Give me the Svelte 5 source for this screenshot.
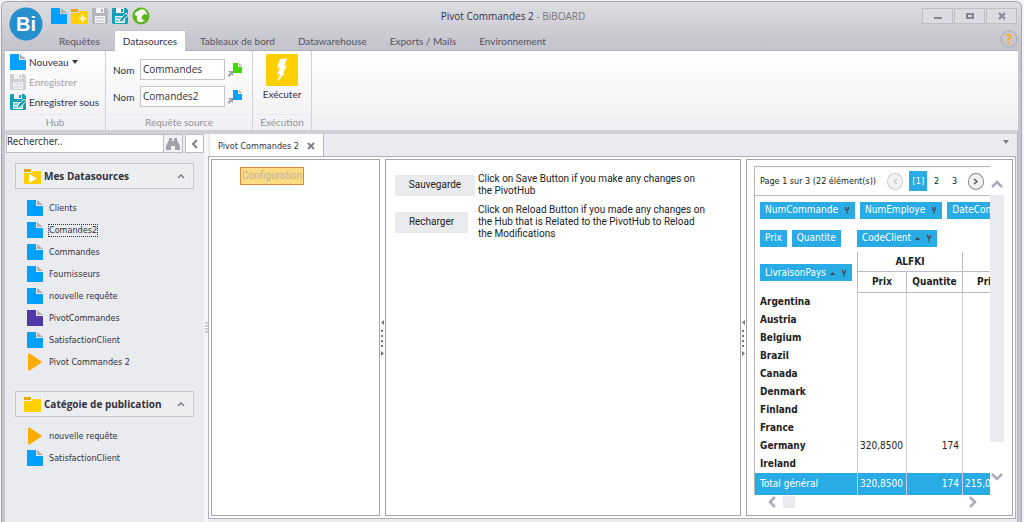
<script lang="ts">
	type Item = { label: string; kind: 'doc' | 'pivot' | 'play'; selected?: boolean };

	const tabs = [
		'Requêtes',
		'Datasources',
		'Tableaux de bord',
		'Datawarehouse',
		'Exports / Mails',
		'Environnement'
	];

	const groups: { title: string; play: boolean; items: Item[] }[] = [
		{
			title: 'Mes Datasources',
			play: true,
			items: [
				{ label: 'Clients', kind: 'doc' },
				{ label: 'Comandes2', kind: 'doc', selected: true },
				{ label: 'Commandes', kind: 'doc' },
				{ label: 'Fournisseurs', kind: 'doc' },
				{ label: 'nouvelle requête', kind: 'doc' },
				{ label: 'PivotCommandes', kind: 'pivot' },
				{ label: 'SatisfactionClient', kind: 'doc' },
				{ label: 'Pivot Commandes 2', kind: 'play' }
			]
		},
		{
			title: 'Catégoie de publication',
			play: false,
			items: [
				{ label: 'nouvelle requête', kind: 'play' },
				{ label: 'SatisfactionClient', kind: 'doc' }
			]
		}
	];

	const rows = [
		['Argentina', '', '', ''],
		['Austria', '', '', ''],
		['Belgium', '', '', ''],
		['Brazil', '', '', ''],
		['Canada', '', '', ''],
		['Denmark', '', '', ''],
		['Finland', '', '', ''],
		['France', '', '', ''],
		['Germany', '320,8500', '174', ''],
		['Ireland', '', '', '']
	];

	let activeTab = $state('Datasources');
	let search = $state('Rechercher..');
	let source1 = $state('Commandes');
	let source2 = $state('Comandes2');
</script>

{#snippet doc(color: string)}
	<svg width="16" height="16" viewBox="0 0 16 16" aria-hidden="true">
		<path d="M0 0h9v6h7v10H0z" fill={color} />
		<path d="M10 0l6 5h-6z" fill="#b0b0b0" />
	</svg>
{/snippet}

{#snippet folder(mark: string)}
	<svg width="17" height="15" viewBox="0 0 17 15" aria-hidden="true">
		<path d="M0 0h7v3H0z" fill="#e5a812" />
		<path d="M0 4h8l1-2h8v13H0z" fill="#ffcf00" />
		{#if mark === 'play'}
			<path d="M5 5l8 4.500-8 4.500z" fill="#fff" />
		{:else if mark === 'plus'}
			<path d="M11.500 6v7M8 9.500h7" stroke="#fff5c8" stroke-width="2" />
		{/if}
	</svg>
{/snippet}

{#snippet play()}
	<svg width="16" height="18" viewBox="0 0 16 18" aria-hidden="true">
		<path d="M1 1.500Q1 0 2.500.600L14 8q1.500 1 0 2L2.500 17.400Q1 18 1 16.500z" fill="#ffab00" />
	</svg>
{/snippet}

{#snippet save(color: string, pen: boolean)}
	<svg width="16" height="16" viewBox="0 0 16 16" aria-hidden="true">
		<path d="M1 0h13l2 2v12.500q0 1.500-1.500 1.500h-13Q0 16 0 14.500V1q0-1 1-1z" fill={color} />
		<path d="M4 0h8v5H4z" fill="#f2f4f5" />
		<path d="M9 1h2v3H9z" fill={color} />
		<path d="M3 8h10v7H3z" fill="#f2f4f5" />
		<path d="M4 10h8M4 13h8" stroke={color} stroke-width="1" />
		{#if pen}
			<path d="M7 14.500l1-3.500 6-6 2.200 2.200-6 6z" fill={color} stroke="#f2f4f5" />
		{/if}
	</svg>
{/snippet}

{#snippet linkDoc(color: string)}
	<svg width="16" height="16" viewBox="0 0 16 16" aria-hidden="true">
		<path d="M6 1h5v4h4v6H6z" fill={color} />
		<path d="M12 1l3 3h-3z" fill="#b0b0b0" />
		<path d="M1 9h5v5L4.500 12.500 2 15 .500 13.500 3 11z" fill="#a3a3a6" />
	</svg>
{/snippet}

{#snippet chevron(d: string)}
	<svg width="14" height="14" viewBox="0 0 14 14" aria-hidden="true">
		<path {d} fill="none" stroke="#a9adb8" stroke-width="2.500" />
	</svg>
{/snippet}

{#snippet chip(label: string, sort: boolean, filter: boolean)}
	<button class="chip">
		{label}
		{#if sort}
			<svg width="5" height="4" viewBox="0 0 5 4" aria-hidden="true">
				<path d="M0 4l2.500-3L5 4z" fill="#404850" />
			</svg>
		{/if}
		{#if filter}
			<svg class="pin" width="6" height="8" viewBox="0 0 6 8" aria-hidden="true">
				<path d="M1 1h4v2l-1.500 2v3h-1V5L1 3z" fill="#404850" />
				<path d="M2 2h2" stroke="#8bb6cc" />
			</svg>
		{/if}
	</button>
{/snippet}

{#snippet grip()}
	<div class="splitter">
		<svg width="5" height="36" viewBox="0 0 5 36" aria-hidden="true">
			<path d="M4 0v5L1 2.500zM1 31v5l3-2.500z" fill="#777" />
			<path d="M1 11h2M1 16h2M1 21h2M1 26h2" stroke="#777" stroke-width="2" />
		</svg>
	</div>
{/snippet}

<div class="window">
	<header>
		<button class="logo" aria-label="Menu">
			<svg width="34" height="34" viewBox="0 0 34 34" aria-hidden="true">
				<circle cx="17" cy="17" r="16.500" fill="#258fce" />
			</svg>
			<span>Bi</span>
		</button>
		<div class="titlebar">
			<div class="quick">
				<button aria-label="Nouveau">{@render doc('#00a0ff')}</button>
				<button aria-label="Ouvrir">{@render folder('plus')}</button>
				<button aria-label="Enregistrer" disabled>{@render save('#b4b5bc', false)}</button>
				<button aria-label="Enregistrer sous">{@render save('#0fa0b4', true)}</button>
				<button aria-label="Actualiser">
					<svg width="18" height="18" viewBox="0 0 18 18" aria-hidden="true">
						<circle cx="9" cy="9" r="8.500" fill="#58b41c" />
						<path
							d="M7 3.500Q10 1.500 13 3l2.500 5-3-1-2.500 2q-1 2 .500 3.500l2.500 1q-4 3-7 1Q4 12 5 9L2.500 8Q3 4.500 7 3.500z"
							fill="#f4faf0"
						/>
					</svg>
				</button>
			</div>
			<h1>Pivot Commandes 2 <span>- BiBOARD</span></h1>
			<div class="controls">
				<button aria-label="Réduire">
					<svg width="10" height="10" viewBox="0 0 10 10"><path d="M1 7h8" stroke="#858692" stroke-width="2" /></svg>
				</button>
				<button aria-label="Agrandir">
					<svg width="10" height="10" viewBox="0 0 10 10"><path d="M2 3h6v4H2z" fill="none" stroke="#858692" stroke-width="2" /></svg>
				</button>
				<button aria-label="Fermer">
					<svg width="10" height="10" viewBox="0 0 10 10"><path d="M2 2l6 6M8 2l-6 6" stroke="#858692" stroke-width="2" /></svg>
				</button>
			</div>
		</div>
		<nav>
			{#each tabs as tab}
				<button class:active={tab === activeTab} onclick={() => (activeTab = tab)}>{tab}</button>
			{/each}
			<button class="help" aria-label="Aide">?</button>
		</nav>
	</header>

	<div class="ribbon">
		<section class="hub">
			<div class="tools">
				<button>{@render doc('#00a0ff')} Nouveau <i class="caret"></i></button>
				<button disabled>{@render save('#cfcfd4', false)} Enregistrer</button>
				<button>{@render save('#0fa0b4', true)} Enregistrer sous</button>
			</div>
			<h2>Hub</h2>
		</section>
		<section class="source">
			<div class="fields">
				<label>Nom <input bind:value={source1} /> {@render linkDoc('#3edc00')}</label>
				<label>Nom <input bind:value={source2} /> {@render linkDoc('#00a0ff')}</label>
			</div>
			<h2>Requête source</h2>
		</section>
		<section class="exec">
			<button>
				<svg width="32" height="32" viewBox="0 0 32 32" aria-hidden="true">
					<rect width="32" height="32" rx="1" fill="#ffcf00" />
					<path d="M14 5l7-.500-3 7.500 3-.500-4 8 2-.500-8 9 3-8-3 .500 3-7-3 .500z" fill="#fff" />
				</svg>
				Exécuter
			</button>
			<h2>Exécution</h2>
		</section>
	</div>

	<div class="body">
		<aside>
			<div class="search">
				<input aria-label="Rechercher" bind:value={search} />
				<button aria-label="Lancer la recherche">
					<svg width="14" height="12" viewBox="0 0 14 12" aria-hidden="true">
						<path d="M3 0h3v3h2V0h3v2l3 6v4H9V8H5v4H0V8l3-6z" fill="#a2a3a8" />
					</svg>
				</button>
				<button class="collapse" aria-label="Replier">
					<svg width="8" height="10" viewBox="0 0 8 10"><path d="M6 1L2 5l4 4" fill="none" stroke="#7f808c" stroke-width="2" /></svg>
				</button>
			</div>
			{#each groups as group}
				<section class="group">
					<button class="group-title">
						{@render folder(group.play ? 'play' : '')}
						<span>{group.title}</span>
						<svg width="8" height="6" viewBox="0 0 8 6" aria-hidden="true">
							<path d="M1 5l3-3 3 3" fill="none" stroke="#7a7b84" stroke-width="1.500" />
						</svg>
					</button>
					<ul>
						{#each group.items as item}
							<li>
								<button class:selected={item.selected}>
									{#if item.kind === 'play'}
										{@render play()}
									{:else}
										{@render doc(item.kind === 'pivot' ? '#5038a8' : '#00a0ff')}
									{/if}
									<span>{item.label}</span>
								</button>
							</li>
						{/each}
					</ul>
				</section>
			{/each}
		</aside>
		<div class="side-splitter">
			<svg width="3" height="12" viewBox="0 0 3 12" aria-hidden="true">
				<path d="M0 1h3M0 4h3M0 7h3M0 10h3" stroke="#a3a4ac" />
			</svg>
		</div>

		<main>
			<div class="doc-tabs">
				<button class="doc-tab">
					Pivot Commandes 2
					<svg width="8" height="8" viewBox="0 0 8 8" aria-hidden="true">
						<path d="M1 1l6 6M7 1L1 7" stroke="#7f808c" stroke-width="2" />
					</svg>
				</button>
				<button class="more" aria-label="Onglets"><i class="caret"></i></button>
			</div>
			<div class="document">
				<div class="panel config">
					<button disabled>Configuration</button>
				</div>
				{@render grip()}
				<div class="panel actions">
					<div class="action">
						<button>Sauvegarde</button>
						<p>Click on Save Button if you make any changes on the PivotHub</p>
					</div>
					<div class="action reload">
						<button>Recharger</button>
						<p>
							Click on Reload Button if you made any changes on the Hub that is Related to the
							PivotHub to Reload the Modifications
						</p>
					</div>
				</div>
				{@render grip()}
				<div class="panel data">
					<div class="pivot">
						<div class="pager">
							<span>Page 1 sur 3 (22 élément(s))</span>
							<button class="round" aria-label="Page précédente" disabled>
								<svg width="7" height="7" viewBox="0 0 7 7"><path d="M5 1L2 3.500 5 6" fill="none" stroke="#aaa" /></svg>
							</button>
							<button class="current">[1]</button>
							<button class="page">2</button>
							<button class="page">3</button>
							<button class="round" aria-label="Page suivante">
								<svg width="7" height="7" viewBox="0 0 7 7"><path d="M2 1l3 2.500L2 6" fill="none" stroke="#555" stroke-width="1.500" /></svg>
							</button>
						</div>
						<div class="table-view">
							<table>
								<colgroup>
									<col class="c-head" />
									<col class="c-price" />
									<col class="c-qty" />
									<col class="c-price" />
								</colgroup>
								<thead>
									<tr class="filters">
										<td colspan="4">
											<div class="chips">
												{@render chip('NumCommande', false, true)}
												{@render chip('NumEmploye', false, true)}
												{@render chip('DateCommande', false, true)}
											</div>
										</td>
									</tr>
									<tr class="fields-row">
										<td>
											<div class="chips">
												{@render chip('Prix', false, false)}
												{@render chip('Quantite', false, false)}
											</div>
										</td>
										<td colspan="3" class="column-field">
											<div class="chips">{@render chip('CodeClient', true, true)}</div>
										</td>
									</tr>
									<tr class="h1">
										<td rowspan="2">
											<div class="chips">{@render chip('LivraisonPays', true, true)}</div>
										</td>
										<th colspan="2" scope="colgroup">ALFKI</th>
										<th></th>
									</tr>
									<tr class="h2">
										<th scope="col">Prix</th>
										<th scope="col">Quantite</th>
										<th scope="col">Prix</th>
									</tr>
								</thead>
								<tbody>
									{#each rows as [country, ...cells]}
										<tr>
											<th scope="row">{country}</th>
											{#each cells as cell}
												<td>{cell}</td>
											{/each}
										</tr>
									{/each}
								</tbody>
								<tfoot>
									<tr>
										<th scope="row">Total général</th>
										<td>320,8500</td>
										<td>174</td>
										<td>215,0000</td>
									</tr>
								</tfoot>
							</table>
						</div>
					</div>
					<div class="v-scroll">
						{@render chevron('M2 10l5-5 5 5')}
						<div class="v-thumb"></div>
						{@render chevron('M2 4l5 5 5-5')}
					</div>
					<div class="h-scroll">
						{@render chevron('M10 2L5 7l5 5')}
						<div class="h-thumb"></div>
						{@render chevron('M4 2l5 5-5 5')}
					</div>
				</div>
			</div>
		</main>
	</div>
</div>

<style>
	:global(body) {
		margin: 0;
		background: #f3f4f5;
	}
	.window,
	.window * {
		box-sizing: border-box;
	}
	.window {
		--ui: 'Open Sans', 'Segoe UI', sans-serif;
		--ribbon: Lato, 'Segoe UI', sans-serif;
		--tahoma: 'DejaVu Sans Condensed', Tahoma, 'DejaVu Sans', sans-serif;
		display: flex;
		flex-direction: column;
		min-height: calc(100vh - 1px);
		margin: 1px 2px 0 1px;
		padding: 0 3px;
		background: linear-gradient(#dcdde0, #c6c5ce 42px);
		border: 1px solid #a5a8b1;
		border-bottom: 0;
		border-radius: 6px 6px 0 0;
		font: 10px/14px var(--ui);
		color: #33313f;
		overflow: hidden;
	}
	button {
		font: inherit;
		color: inherit;
		border: 0;
		padding: 0;
		background: none;
		white-space: nowrap;
	}
	input {
		min-width: 0;
		font: inherit;
		color: inherit;
	}
	svg {
		display: block;
		flex: none;
	}
	h1,
	h2,
	p,
	ul {
		margin: 0;
		padding: 0;
		font-weight: normal;
		font-size: inherit;
	}
	ul {
		list-style: none;
	}

	header {
		display: grid;
		grid-template-columns: 45px 1fr;
		grid-template-rows: 28px 20px;
		border-bottom: 1px solid #adb0ba;
	}
	.logo {
		grid-row: span 2;
		display: grid;
		align-content: start;
		justify-content: start;
		justify-items: center;
		padding: 5px 0 0 4px;
	}
	.logo > * {
		grid-area: 1 / 1;
	}
	.logo span {
		font: bold 20px/34px 'Liberation Sans', Arial, sans-serif;
		color: #fff;
	}
	.titlebar {
		display: grid;
		grid-template-columns: 1fr auto 1fr;
		align-items: center;
	}
	.quick {
		display: flex;
		align-items: center;
		gap: 4px;
		padding-left: 1px;
	}
	h1 {
		padding-right: 42px;
	}
	h1 span {
		color: #777884;
	}
	.controls {
		display: flex;
		justify-content: flex-end;
		gap: 1px;
		padding-right: 1px;
	}
	.controls button {
		display: grid;
		place-items: center;
		width: 31px;
		height: 16px;
		background: #dbdce0;
		border: 1px solid #bdbec5;
	}
	nav {
		display: flex;
		gap: 5px;
		font-family: var(--ribbon);
	}
	nav button {
		padding: 0 8px;
		border: 1px solid transparent;
		border-bottom: 0;
		color: #55545f;
	}
	nav .active {
		background: #fff;
		border-color: #c5c6cd;
		color: #33313f;
		margin-bottom: -1px;
	}
	nav .help {
		width: 18px;
		height: 18px;
		margin-left: auto;
		padding: 0;
		border: 2px solid #b9b9bb;
		border-radius: 50%;
		font: bold 14px/14px var(--ui);
		color: #ffac10;
	}

	.ribbon {
		display: flex;
		height: 79px;
		background: linear-gradient(#fff, #f0f0f4);
		font-family: var(--ribbon);
	}
	.ribbon section {
		display: flex;
		flex-direction: column;
		justify-content: space-between;
		border-right: 1px solid #d2d3d9;
		padding: 1px 5px 0;
	}
	.ribbon h2 {
		height: 16px;
		text-align: center;
		color: #93939c;
		border-top: 1px solid #e9e9ee;
	}
	.hub {
		width: 101px;
	}
	.hub button {
		display: flex;
		align-items: center;
		gap: 3px;
		height: 20px;
	}
	.hub button:disabled {
		color: #a2a2a9;
	}
	.caret {
		display: block;
		border: 3px solid transparent;
		border-top: 4px solid #3a3946;
		border-bottom: 0;
	}
	.source {
		width: 147px;
	}
	.source .fields {
		display: grid;
		gap: 6px;
		padding-top: 7px;
	}
	.source label {
		display: grid;
		grid-template-columns: 25px 1fr 20px;
		gap: 2px;
		align-items: center;
		padding-left: 2px;
	}
	.source input {
		height: 21px;
		padding: 0 2px 2px;
		border: 1px solid #c3c4cc;
		background: #fff;
		font-family: var(--ui);
	}
	.ribbon .exec {
		width: 59px;
		padding: 3px 4px 0;
	}
	.exec button {
		display: flex;
		flex-direction: column;
		align-items: center;
		gap: 1px;
	}

	.body {
		flex: 1;
		display: flex;
		border-right: 1px solid #b3b4bd;
		border-top: 4px solid #d0d0d6;
		background: #eaebef;
	}
	aside {
		width: 199px;
		font-family: var(--tahoma);
	}
	.search {
		display: flex;
		height: 19px;
		padding-left: 1px;
	}
	.search input {
		flex: 1;
		padding: 0 0 3px;
		border: 1px solid #bcbdc5;
		background: #fff;
	}
	.search button {
		display: grid;
		place-items: center;
		width: 19px;
		background: #f2f3f5;
		border: 1px solid #bcbdc5;
		border-left: 0;
	}
	.search .collapse {
		background: #fff;
		border-left: 1px solid #bcbdc5;
		margin-left: 2px;
	}
	.group {
		padding: 10px 10px 0;
	}
	.group + .group {
		padding-top: 18px;
	}
	.group-title {
		display: flex;
		align-items: center;
		gap: 3px;
		width: 100%;
		height: 26px;
		padding: 0 8px;
		border: 1px solid #c6c7ce;
		background: #edeef0;
		font-family: var(--ui);
		font-weight: bold;
	}
	.group-title span {
		flex: 1;
		text-align: left;
	}
	.group ul {
		padding: 8px 0 0 12px;
		font-size: 9px;
	}
	.group li button {
		display: flex;
		align-items: center;
		gap: 5px;
		height: 22px;
	}
	.group li span {
		border: 1px solid transparent;
		line-height: 11px;
	}
	.group .selected span {
		border: 1px dotted #33313f;
	}
	.side-splitter {
		display: grid;
		place-items: center;
		width: 4px;
		background: #f6f6f8;
	}

	main {
		flex: 1;
		min-width: 0;
		display: flex;
		flex-direction: column;
		padding: 0 1px 3px 0;
	}
	.doc-tabs {
		display: flex;
		justify-content: space-between;
		height: 22px;
		padding-left: 2px;
		font-family: var(--tahoma);
		font-size: 9px;
	}
	.doc-tab {
		display: flex;
		align-items: center;
		gap: 8px;
		padding: 2px 8px 0;
		border-right: 1px solid #b3b4bd;
		background: #fff;
	}
	.more {
		padding: 0 7px 7px;
	}
	.more .caret {
		border-top-color: #7b7c88;
	}
	.document {
		flex: 1;
		display: flex;
		padding: 2px;
		border: 1px solid #aeafb6;
		background: #fff;
	}
	.panel {
		border: 1px solid #a3a4a8;
		font-family: Roboto, sans-serif;
		color: #222;
	}
	.splitter {
		display: grid;
		place-items: center;
		width: 5px;
	}
	.config {
		width: 169px;
		padding: 7px 28px;
	}
	.config button {
		display: block;
		height: 18px;
		padding: 0 1px;
		border: 1px solid #d98c3f;
		background: #fddb81;
		color: #b8b3a4;
	}
	.actions {
		flex: 1;
		padding: 13px 32px 0 9px;
		line-height: 12px;
	}
	.action {
		display: grid;
		grid-template-columns: 80px 1fr;
		gap: 3px;
		align-items: center;
	}
	.action + .action {
		margin-top: 7px;
	}
	.action button {
		height: 21px;
		background: #eaebef;
	}
	.reload button {
		margin-right: 7px;
	}

	.data {
		display: grid;
		grid-template-columns: 1fr 14px;
		grid-template-rows: auto 14px;
		align-content: start;
		width: 267px;
		padding: 6px 8px 0 7px;
		font-family: var(--tahoma);
	}
	.pivot {
		min-width: 0;
		overflow: hidden;
		border: 1px solid #b3b4b8;
		border-width: 1px 0 0 1px;
	}
	.pager {
		display: flex;
		align-items: center;
		height: 29px;
		padding-left: 5px;
		border-bottom: 1px solid #b9bcc8;
		font-size: 9px;
		white-space: nowrap;
	}
	.round {
		display: grid;
		place-items: center;
		width: 17px;
		height: 17px;
		margin: 0 6px 0 11px;
		border: 1px solid #888;
		border-radius: 50%;
		background: #f2f3f4;
	}
	.round:disabled {
		border-color: #ccc;
	}
	.current {
		width: 19px;
		height: 20px;
		background: #29ace6;
		color: #fff;
	}
	.page {
		width: 19px;
	}
	.page + .round {
		margin-left: 4px;
	}
	.table-view {
		overflow: hidden;
	}
	table {
		width: 256px;
		table-layout: fixed;
		border-collapse: separate;
		border-spacing: 0;
		line-height: 14px;
	}
	.c-head {
		width: 102px;
	}
	.c-price {
		width: 49px;
	}
	.c-qty {
		width: 56px;
	}
	td,
	th {
		padding: 0;
		overflow: hidden;
		white-space: nowrap;
	}
	.chips {
		display: flex;
		gap: 5px;
		padding-left: 5px;
	}
	.chip {
		display: flex;
		flex: none;
		align-items: center;
		gap: 4px;
		height: 17px;
		padding: 0 5px;
		background: #29ace6;
		color: #fff;
	}
	.pin {
		margin-left: 2px;
	}
	.filters,
	.fields-row {
		height: 28px;
	}
	.column-field .chips {
		padding-left: 0;
	}
	.h1 {
		height: 20px;
	}
	.h2 {
		height: 21px;
	}
	.h1 th,
	.h2 th {
		border-left: 1px solid #b9bcc8;
		border-bottom: 1px solid #b9bcc8;
	}
	tbody tr {
		height: 18px;
	}
	tbody th,
	tfoot th {
		padding-left: 5px;
		text-align: left;
	}
	tbody td,
	tfoot td {
		padding-right: 3px;
		border-left: 1px solid #c9ccd5;
		text-align: right;
	}
	tfoot tr {
		height: 22px;
		background: #29ace6;
		color: #fff;
	}
	tfoot th {
		font-weight: normal;
	}
	.v-scroll {
		display: flex;
		flex-direction: column;
		padding: 11px 0;
	}
	.v-thumb {
		height: 247px;
		margin: 4px 0 auto;
		background: #eaebef;
	}
	.h-scroll {
		display: flex;
		align-items: center;
		padding: 0 10px 0 11px;
	}
	.h-thumb {
		width: 12px;
		height: 12px;
		margin: 0 auto 0 4px;
		background: #eaebef;
	}
</style>
